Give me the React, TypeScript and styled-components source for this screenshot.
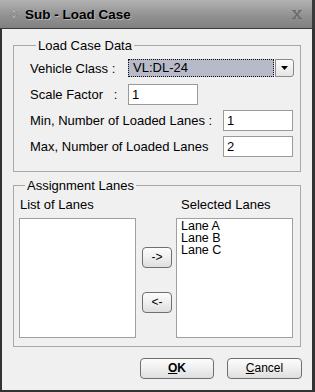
import React from 'react';
import styled, { createGlobalStyle } from 'styled-components';

const Global = createGlobalStyle`
  * { box-sizing: border-box; }
  html, body { margin: 0; padding: 0; background: #ffffff; }
  body { font-family: "Liberation Sans", Arial, sans-serif; font-size: 13px; color: #000; }
`;

const Window = styled.div`
  width: 315px;
  height: 392px;
  display: flex;
  flex-direction: column;
`;

const TitleBar = styled.div`
  height: 29px;
  display: flex;
  align-items: center;
  padding-left: 11px;
  padding-right: 10px;
  background: linear-gradient(#b2b2b2, #929292 55%, #808080);
  border-bottom: 1px solid #3a3a3a;
  border-right: 3px solid #3a3a3a;
`;

const TitleText = styled.span`
  margin-left: 8px;
  font-weight: bold;
  font-size: 13.5px;
  color: #000;
  text-shadow: 1px 1px 0 rgba(255, 255, 255, 0.35);
  flex: 1;
`;

const Body = styled.div`
  flex: 1;
  display: flex;
  flex-direction: column;
  background: #f0f0f0;
  border-left: 2px solid #333333;
  border-right: 3px solid #333333;
  border-bottom: 2px solid #333333;
  padding: 9px 11px 0 11px;
`;

const Group = styled.fieldset<{ $pt: number; $pb: number; $pl: number; $mt?: number }>`
  margin: ${(p) => p.$mt ?? 0}px 0 0 0;
  border: 1px solid #a8a8a8;
  padding: ${(p) => p.$pt}px 0 ${(p) => p.$pb}px ${(p) => p.$pl}px;
  min-width: 0;
`;

const Legend = styled.legend`
  margin-left: 6px;
  padding: 0 2px;
  font-size: 13px;
  line-height: 15px;
`;

const Row = styled.div<{ $mt: number; $h: number }>`
  display: flex;
  align-items: center;
  height: ${(p) => p.$h}px;
  margin-top: ${(p) => p.$mt}px;
`;

const Label = styled.span<{ $w: number }>`
  width: ${(p) => p.$w}px;
  white-space: pre;
  font-size: 13px;
`;

const Combo = styled.div`
  display: flex;
  width: 166px;
  height: 18px;
  gap: 1px;
`;

const ComboField = styled.div`
  flex: 1;
  background: #b8bac9;
  border: 1px dotted #111;
  font-size: 13px;
  line-height: 16px;
  padding-left: 4px;
`;

const ComboButton = styled.div`
  width: 19px;
  border: 1px solid #8a8a8a;
  border-radius: 0 3px 3px 0;
  background: linear-gradient(#fdfdfd, #e4e4e4);
  display: flex;
  align-items: center;
  justify-content: center;
`;

const TextBox = styled.input<{ $w: number }>`
  width: ${(p) => p.$w}px;
  height: 21px;
  margin: 0;
  border: 1px solid #9a9a9a;
  background: #fff;
  font-family: "Liberation Sans", Arial, sans-serif;
  font-size: 13px;
  padding: 0 0 0 3px;
  color: #000;
  outline: none;
`;

const LanesGrid = styled.div`
  display: grid;
  grid-template-columns: 117px 40px 117px;
  grid-template-rows: 16px 120px;
  row-gap: 5px;
`;

const ColLabel = styled.div<{ $indent: number }>`
  font-size: 13px;
  line-height: 16px;
  padding-left: ${(p) => p.$indent}px;
  white-space: nowrap;
`;

const ListBox = styled.div`
  background: #fff;
  border: 1px solid #a0a0a0;
  padding: 1px 0 0 4px;
  overflow: hidden;
`;

const ListItem = styled.div`
  font-size: 12.5px;
  line-height: 12px;
  height: 12px;
`;

const MoveCol = styled.div`
  display: flex;
  flex-direction: column;
  padding: 29px 0 0 6px;
  gap: 24px;
`;

const PushButton = styled.button<{ $w: number; $bold?: boolean }>`
  width: ${(p) => p.$w}px;
  height: 21px;
  margin: 0;
  padding: 0;
  border: 1px solid #6f6f6f;
  border-radius: 4px;
  background: linear-gradient(#fcfcfc, #efefef 50%, #dedede);
  font-family: "Liberation Sans", Arial, sans-serif;
  font-size: 12px;
  font-weight: ${(p) => (p.$bold ? 'bold' : 'normal')};
  color: #000;
  line-height: 19px;
  text-align: center;
`;

const Footer = styled.div`
  display: flex;
  justify-content: flex-end;
  gap: 13px;
  margin-top: 11px;
  margin-right: -1px;
`;

const U = styled.span`
  text-decoration: underline;
`;

const Lanes = ['Lane A', 'Lane B', 'Lane C'];

export default function App() {
  return (
    <>
      <Global />
      <Window>
        <TitleBar>
          <svg width="6" height="10" viewBox="0 0 6 10">
            <path d="M3 0.5 L5.5 3.5 L4.5 4 L3 2.3 L1.5 4 L0.5 3.5 Z" fill="#e8e8e8" stroke="#5a5a5a" strokeWidth="0.5" />
            <path d="M3 9.5 L5.5 6.5 L4.5 6 L3 7.7 L1.5 6 L0.5 6.5 Z" fill="#e8e8e8" stroke="#5a5a5a" strokeWidth="0.5" />
          </svg>
          <TitleText>Sub - Load Case</TitleText>
          <svg width="10" height="9" viewBox="0 0 10 9">
            <path d="M1.5 0.5 L8.5 8.5 M8.5 0.5 L1.5 8.5" stroke="#6c6c6c" strokeWidth="1.6" fill="none" />
            <path d="M0 0.5 H4 M6 0.5 H10 M0 8.5 H4 M6 8.5 H10" stroke="#6c6c6c" strokeWidth="1" fill="none" />
          </svg>
        </TitleBar>
        <Body>
          <Group $pt={6} $pb={14} $pl={16}>
            <Legend>Load Case Data</Legend>
            <Row $mt={0} $h={18}>
              <Label $w={98}>Vehicle Class :</Label>
              <Combo>
                <ComboField>VL:DL-24</ComboField>
                <ComboButton>
                  <svg width="7" height="4" viewBox="0 0 7 4">
                    <path d="M0 0 H7 L3.5 4 Z" fill="#000" />
                  </svg>
                </ComboButton>
              </Combo>
            </Row>
            <Row $mt={7} $h={21}>
              <Label $w={98}>{'Scale Factor   :'}</Label>
              <TextBox $w={70} readOnly defaultValue="1" />
            </Row>
            <Row $mt={5} $h={21}>
              <Label $w={193}>Min, Number of Loaded Lanes :</Label>
              <TextBox $w={70} readOnly defaultValue="1" />
            </Row>
            <Row $mt={5} $h={21}>
              <Label $w={193}>Max, Number of Loaded Lanes</Label>
              <TextBox $w={70} readOnly defaultValue="2" />
            </Row>
          </Group>
          <Group $pt={4} $pb={8} $pl={5} $mt={6}>
            <Legend>Assignment Lanes</Legend>
            <LanesGrid>
              <ColLabel $indent={1}>List of Lanes</ColLabel>
              <div />
              <ColLabel $indent={5}>Selected Lanes</ColLabel>
              <ListBox />
              <MoveCol>
                <PushButton $w={30}>-&gt;</PushButton>
                <PushButton $w={30}>&lt;-</PushButton>
              </MoveCol>
              <ListBox>
                {Lanes.map((l) => (
                  <ListItem key={l}>{l}</ListItem>
                ))}
              </ListBox>
            </LanesGrid>
          </Group>
          <Footer>
            <PushButton $w={74} $bold>
              <U>O</U>K
            </PushButton>
            <PushButton $w={75}>
              <U>C</U>ancel
            </PushButton>
          </Footer>
        </Body>
      </Window>
    </>
  );
}
